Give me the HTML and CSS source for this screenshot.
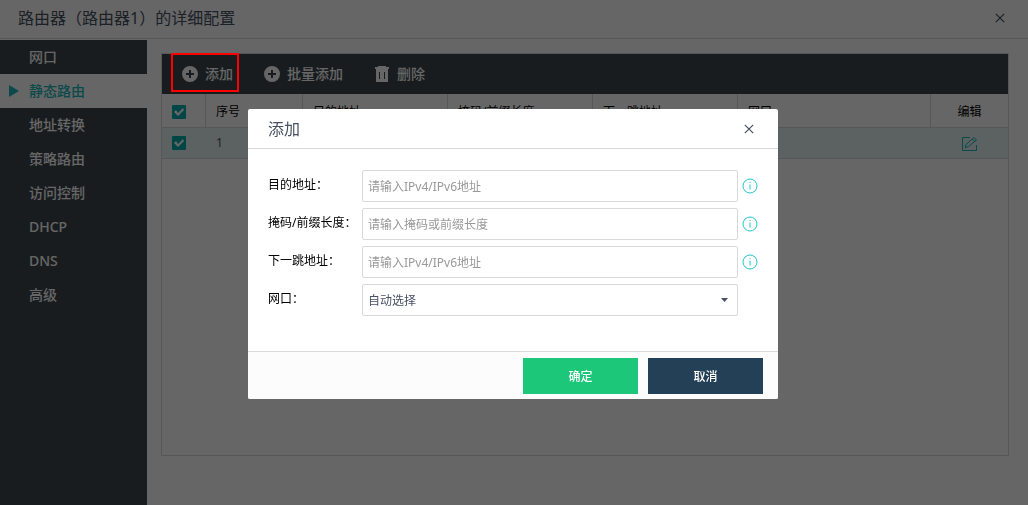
FILE: index.html
```html
<!DOCTYPE html>
<html lang="zh-CN">
<head>
<meta charset="utf-8">
<meta name="viewport" content="width=device-width, initial-scale=1">
<title>路由器（路由器1）的详细配置</title>
<link rel="stylesheet" href="styles.css">
</head>
<body>
<div class="page">
  <header class="page-header">
    <h1 class="page-title">路由器（路由器1）的详细配置</h1>
    <button class="close" type="button" aria-label="关闭页面"><svg width="10" height="10" viewBox="0 0 10 10"><path d="M.8 .8 9.2 9.2M9.2 .8 .8 9.2"/></svg></button>
  </header>
  <div class="body">
    <nav class="sidebar">
      <a class="nav-item" href="#port">网口</a>
      <a class="nav-item active" href="#static">静态路由</a>
      <a class="nav-item" href="#nat">地址转换</a>
      <a class="nav-item" href="#policy">策略路由</a>
      <a class="nav-item" href="#access">访问控制</a>
      <a class="nav-item" href="#dhcp">DHCP</a>
      <a class="nav-item" href="#dns">DNS</a>
      <a class="nav-item" href="#advanced">高级</a>
    </nav>
    <main class="content">
      <section class="panel">
        <div class="toolbar">
          <button class="tool highlighted" type="button"><svg width="16" height="16" viewBox="0 0 16 16"><path fill-rule="evenodd" d="M8 0a8 8 0 1 0 0 16A8 8 0 0 0 8 0ZM7 4h2v3h3v2H9v3H7V9H4V7h3Z"/></svg>添加</button>
          <button class="tool" type="button"><svg width="16" height="16" viewBox="0 0 16 16"><path fill-rule="evenodd" d="M8 0a8 8 0 1 0 0 16A8 8 0 0 0 8 0ZM7 4h2v3h3v2H9v3H7V9H4V7h3Z"/></svg>批量添加</button>
          <button class="tool" type="button"><svg width="16" height="16" viewBox="0 0 16 16"><path fill-rule="evenodd" d="M4 0h8v1h3v2H1V1h3ZM2 3h12v13H2ZM5 6v7h1V6ZM10 6v7h1V6Z"/></svg>删除</button>
        </div>
        <table class="routes">
          <colgroup><col class="c-check"><col class="c-index"><col class="c-mid"><col class="c-mid"><col class="c-mid"><col><col class="c-edit"></colgroup>
          <thead>
            <tr><th><input class="check" type="checkbox" aria-label="全选" checked></th><th>序号</th><th>目的地址</th><th>掩码/前缀长度</th><th>下一跳地址</th><th>网口</th><th class="edit">编辑</th></tr>
          </thead>
          <tbody>
            <tr><td><input class="check" type="checkbox" aria-label="选择第1行" checked></td><td>1</td><td></td><td></td><td></td><td></td><td class="edit"><button class="edit-button" type="button" aria-label="编辑"><svg width="17" height="16" viewBox="0 0 17 16"><path d="M9 1.500H1.500V14.500H15.500V9"/><path d="M4 11.500 5 8.500 13 1.500 15.500 4 7.500 10.500ZM11.500 3 14 5.500"/></svg></button></td></tr>
          </tbody>
        </table>
      </section>
    </main>
  </div>
</div>
<div class="overlay">
  <form class="dialog" role="dialog" aria-modal="true" aria-labelledby="dialog-title">
    <div class="dialog-header">
      <h2 class="dialog-title" id="dialog-title">添加</h2>
      <button class="close" type="button" aria-label="关闭"><svg width="10" height="10" viewBox="0 0 10 10"><path d="M.8 .8 9.2 9.2M9.2 .8 .8 9.2"/></svg></button>
    </div>
    <div class="fields">
      <label class="label" for="dest">目的地址：</label>
      <input class="control" id="dest" type="text" placeholder="请输入IPv4/IPv6地址">
      <svg class="info" viewBox="0 0 16 16"><circle cx="8" cy="8" r="7"/><path d="M8 4v1M8 6.500v5"/></svg>
      <label class="label" for="mask">掩码/前缀长度：</label>
      <input class="control" id="mask" type="text" placeholder="请输入掩码或前缀长度">
      <svg class="info" viewBox="0 0 16 16"><circle cx="8" cy="8" r="7"/><path d="M8 4v1M8 6.500v5"/></svg>
      <label class="label" for="hop">下一跳地址：</label>
      <input class="control" id="hop" type="text" placeholder="请输入IPv4/IPv6地址">
      <svg class="info" viewBox="0 0 16 16"><circle cx="8" cy="8" r="7"/><path d="M8 4v1M8 6.500v5"/></svg>
      <label class="label" for="port">网口：</label>
      <div class="select-box">
        <select class="control" id="port"><option>自动选择</option></select>
      </div>
    </div>
    <div class="dialog-footer">
      <button class="button confirm" type="submit">确定</button>
      <button class="button cancel" type="button">取消</button>
    </div>
  </form>
</div>
</body>
</html>
```
FILE: styles.css
```css
* { box-sizing: border-box; }

body {
  margin: 0;
  font: 12px/18px "Noto Sans", "Noto Sans CJK SC", sans-serif;
  color: #000;
  background: #fff;
}

button, input, select { font: inherit; }

button {
  padding: 0;
  border: 0;
  background: none;
  color: inherit;
}

svg { display: block; }

.page {
  display: flex;
  flex-direction: column;
  min-height: 100vh;
}

.page-header {
  display: flex;
  align-items: center;
  justify-content: space-between;
  height: 39px;
  margin-bottom: 1px;
  padding: 0 23px 2px 18px;
  border-bottom: 1px solid #d9d9d9;
}

.page-title, .dialog-title {
  margin: 0;
  font-size: 16px;
  line-height: 24px;
  font-weight: 400;
  color: #475063;
}

.close svg {
  fill: none;
  stroke: #475063;
  stroke-width: 1.2;
}

.body {
  display: flex;
  flex: 1;
}

.sidebar {
  flex: 0 0 147px;
  background: #3c464e;
}

.nav-item {
  display: flex;
  align-items: center;
  height: 34px;
  padding-left: 29px;
  font-size: 14px;
  font-weight: 500;
  color: #fff;
  text-decoration: none;
}

.nav-item.active {
  padding-left: 9px;
  background: #fff;
  color: #19b9ba;
}

.nav-item.active::before {
  content: "";
  width: 10px;
  height: 12px;
  margin-right: 10px;
  background: #19b9ba;
  clip-path: polygon(0 0, 100% 50%, 0 100%);
}

.content {
  display: flex;
  flex: 1;
  min-width: 0;
  padding: 13px 19px 49px 14px;
}

.panel {
  flex: 1;
  border: 1px solid #d9d9d9;
}

.toolbar {
  display: flex;
  align-items: center;
  gap: 31px;
  height: 40px;
  padding-left: 20px;
  background: #3c464e;
}

.tool {
  position: relative;
  display: flex;
  align-items: center;
  gap: 7px;
  font-size: 14px;
  font-weight: 500;
  color: #fff;
}

.tool svg { fill: #fff; }

.tool.highlighted::after {
  content: "";
  position: absolute;
  z-index: 2;
  inset: -12px -6px -9px -11px;
  border: 2px solid #f00;
}

.routes {
  width: 100%;
  table-layout: fixed;
  border-collapse: separate;
  border-spacing: 0;
}

.c-check { width: 44px; }
.c-index { width: 97px; }
.c-mid { width: 145px; }
.c-edit { width: 77px; }

.routes th, .routes td {
  padding: 0 10px;
  border-bottom: 1px solid #d9d9d9;
  text-align: left;
  font-weight: 400;
}

.routes th {
  height: 34px;
  padding-top: 3px;
  border-right: 1px solid #d9d9d9;
}

.routes td {
  height: 31px;
  background: #e6f3f3;
  color: #555;
}

.routes th:last-child { border-right: 0; }
.routes .edit { text-align: center; }

.check {
  appearance: none;
  display: block;
  width: 14px;
  height: 14px;
  margin: 0;
  border-radius: 1px;
  background: #00aeb0;
}

.check::before {
  content: "";
  display: block;
  width: 14px;
  height: 14px;
  background: #fff;
  clip-path: polygon(2px 7px, 4px 5px, 6px 8px, 11px 3px, 12px 5px, 6px 11px);
}

.edit-button {
  display: inline-block;
  vertical-align: middle;
}

.edit-button svg {
  fill: none;
  stroke: #19b9ba;
}

.overlay {
  position: fixed;
  z-index: 1;
  inset: 0;
  display: flex;
  align-items: flex-start;
  justify-content: center;
  padding: 109px 2px 0 0;
  background: rgba(0, 0, 0, .6);
}

.dialog {
  width: 530px;
  max-width: 100%;
  border-radius: 2px;
  overflow: hidden;
  background: #fff;
}

.dialog-header {
  display: flex;
  align-items: center;
  justify-content: space-between;
  height: 40px;
  padding: 0 24px 0 20px;
  border-bottom: 1px solid #d9d9d9;
}

.fields {
  display: grid;
  grid-template-columns: 90px 1fr 16px;
  column-gap: 4px;
  row-gap: 6px;
  align-items: center;
  padding: 21px 20px 35px;
}

.label {
  grid-column: 1;
  padding-bottom: 2px;
  white-space: nowrap;
}

.control {
  width: 100%;
  height: 32px;
  padding: 0 5px;
  border: 1px solid #d9d9d9;
  border-radius: 2px;
  background: #fff;
  color: #475063;
}

.control::placeholder {
  color: #999;
  opacity: 1;
}

select.control {
  display: block;
  padding-top: 2px;
  appearance: none;
}

.select-box {
  position: relative;
}

.select-box::after {
  content: "";
  position: absolute;
  top: 14px;
  right: 10px;
  width: 7px;
  height: 4px;
  background: #475063;
  clip-path: polygon(0 0, 100% 0, 50% 100%);
  pointer-events: none;
}

.info {
  width: 16px;
  height: 16px;
  fill: none;
  stroke: #1fc5c7;
}

.dialog-footer {
  display: flex;
  justify-content: flex-end;
  gap: 10px;
  padding: 6px 15px 5px;
  border-top: 1px solid #d9d9d9;
  background: #fcfcfc;
}

.button {
  width: 115px;
  height: 36px;
  padding-top: 2px;
  font-weight: 500;
  color: #fff;
}

.confirm { background: #1dc779; }
.cancel { background: #234057; }
```
